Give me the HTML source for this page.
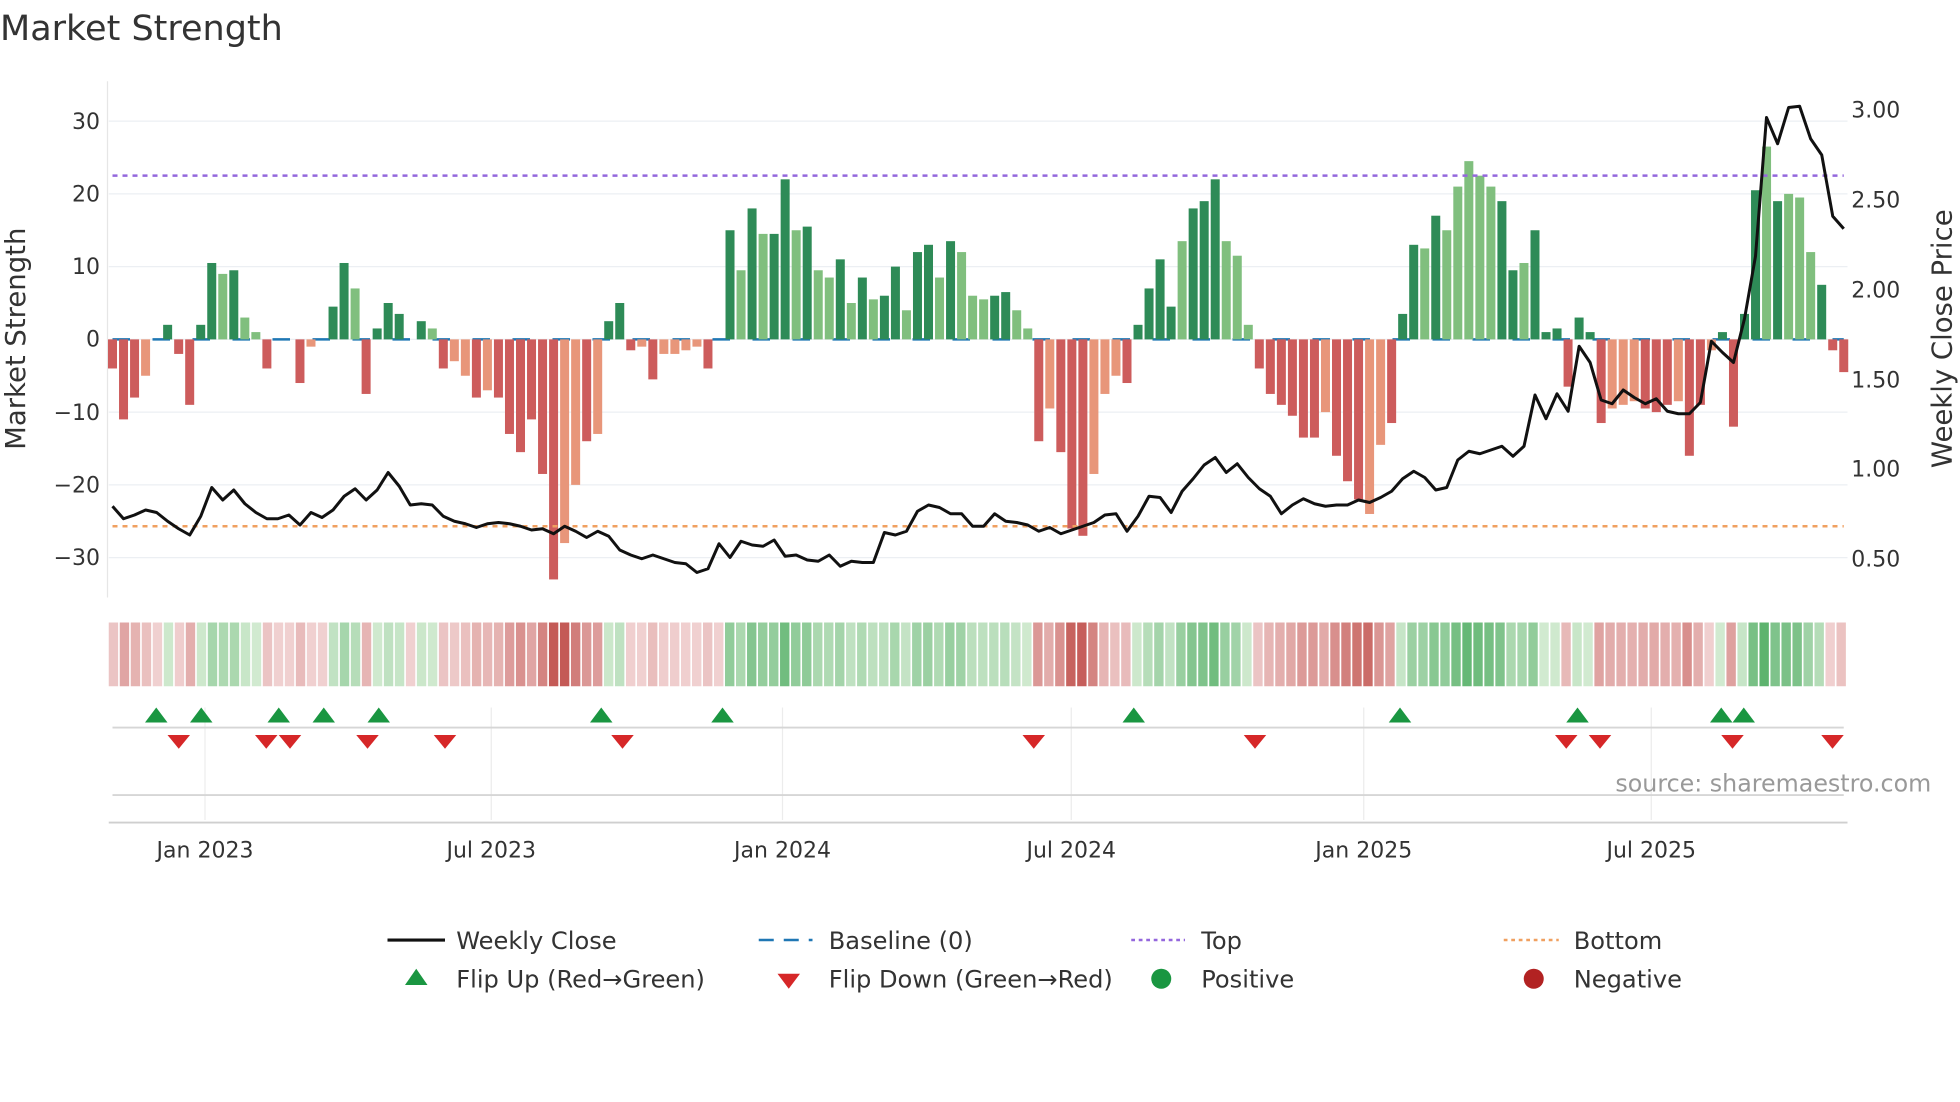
<!DOCTYPE html>
<html><head><meta charset="utf-8"><style>
html,body{margin:0;padding:0;background:#fff;}
svg{display:block;font-family:"DejaVu Sans","Liberation Sans",sans-serif;}
</style></head><body>
<svg id="s" width="1960" height="1102" viewBox="0 0 1568 881.6" xmlns="http://www.w3.org/2000/svg">
<rect width="1568" height="882" fill="#fff"/>
<text x="0" y="32" font-size="28" fill="#333">Market Strength</text>
<g id="grid"></g>
<g id="bars"></g>
<g id="heat"></g>
<g id="marks"></g>
<g font-size="17.6" fill="#333">
<text x="80" y="103" text-anchor="end">30</text>
<text x="80" y="161" text-anchor="end">20</text>
<text x="80" y="219" text-anchor="end">10</text>
<text x="80" y="277" text-anchor="end">0</text>
<text x="80" y="336" text-anchor="end">−10</text>
<text x="80" y="394" text-anchor="end">−20</text>
<text x="80" y="452" text-anchor="end">−30</text>
<text x="1481" y="94">3.00</text>
<text x="1481" y="166">2.50</text>
<text x="1481" y="238">2.00</text>
<text x="1481" y="310">1.50</text>
<text x="1481" y="381">1.00</text>
<text x="1481" y="453">0.50</text>
<text x="164" y="686" text-anchor="middle">Jan 2023</text>
<text x="393" y="686" text-anchor="middle">Jul 2023</text>
<text x="626" y="686" text-anchor="middle">Jan 2024</text>
<text x="857" y="686" text-anchor="middle">Jul 2024</text>
<text x="1091" y="686" text-anchor="middle">Jan 2025</text>
<text x="1321" y="686" text-anchor="middle">Jul 2025</text>
</g>
<text x="20" y="271" font-size="22" fill="#333" text-anchor="middle" transform="rotate(-90 20 271)">Market Strength</text>
<text x="1561" y="271" font-size="22" fill="#333" text-anchor="middle" transform="rotate(-90 1561 271)">Weekly Close Price</text>
<text x="1545" y="633" font-size="19" fill="#999" text-anchor="end">source: sharemaestro.com</text>
<g font-size="19.3" fill="#333">
<line x1="310" y1="752" x2="356" y2="752" stroke="#111" stroke-width="2.5"/>
<text x="365" y="759">Weekly Close</text>
<line x1="607" y1="752" x2="650" y2="752" stroke="#1f77b4" stroke-width="2" stroke-dasharray="12,8"/>
<text x="663" y="759">Baseline (0)</text>
<line x1="905" y1="752" x2="948" y2="752" stroke="#9467dd" stroke-width="2" stroke-dasharray="3,3"/>
<text x="961" y="759">Top</text>
<line x1="1203" y1="752" x2="1247" y2="752" stroke="#f0a060" stroke-width="2" stroke-dasharray="3,3"/>
<text x="1259" y="759">Bottom</text>
<polygon points="324,788 342,788 333,775" fill="#1a9641"/>
<text x="365" y="790">Flip Up (Red→Green)</text>
<polygon points="622,779 640,779 631,791" fill="#d62728"/>
<text x="663" y="790">Flip Down (Green→Red)</text>
<circle cx="929" cy="783" r="8" fill="#1a9641"/>
<text x="961" y="790">Positive</text>
<circle cx="1227" cy="783" r="8" fill="#b22222"/>
<text x="1259" y="790">Negative</text>
</g>
</svg>
<script>
var NS="http://www.w3.org/2000/svg";
function el(p,t,a){var e=document.createElementNS(NS,t);for(var k in a)e.setAttribute(k,a[k]);document.getElementById(p).appendChild(e);return e;}
var V=[-4,-11,-8,-5,0,2,-2,-9,2,10.5,9,9.5,3,1,-4,0,0,-6,-1,0,4.5,10.5,7,-7.5,1.5,5,3.5,0,2.5,1.5,-4,-3,-5,-8,-7,-8,-13,-15.5,-11,-18.5,-33,-28,-20,-14,-13,2.5,5,-1.5,-1,-5.5,-2,-2,-1.5,-1,-4,0,15,9.5,18,14.5,14.5,22,15,15.5,9.5,8.5,11,5,8.5,5.5,6,10,4,12,13,8.5,13.5,12,6,5.5,6,6.5,4,1.5,-14,-9.5,-15.5,-26,-27,-18.5,-7.5,-5,-6,2,7,11,4.5,13.5,18,19,22,13.5,11.5,2,-4,-7.5,-9,-10.5,-13.5,-13.5,-10,-16,-19.5,-22,-24,-14.5,-11.5,3.5,13,12.5,17,15,21,24.5,22.5,21,19,9.5,10.5,15,1,1.5,-6.5,3,1,-11.5,-9.5,-9,-8.5,-9.5,-10,-9,-8.5,-16,-9,-1.5,1,-12,3.5,20.5,26.5,19,20,19.5,12,7.5,-1.5,-4.5];
var light={};[3,4,10,12,13,18,22,27,29,31,32,34,41,42,44,48,50,51,52,53,57,59,62,64,65,67,69,72,75,77,78,79,82,83,85,89,90,91,97,101,102,103,110,114,115,119,121,122,123,124,125,128,136,137,138,142,145,150,152,153,154].forEach(function(i){light[i]=1;});
var N=V.length, x0=90, dx=(1475-90)/(N-1), y0=271.5, k=5.82;
for(var v=-30;v<=30;v+=10){el("grid","line",{x1:87,x2:1478,y1:y0-v*k,y2:y0-v*k,stroke:"#eceff3","stroke-width":1});}
el("grid","line",{x1:86,x2:86,y1:65,y2:478,stroke:"#e6e6e6"});
[164,393,626,857,1091,1321].forEach(function(x){el("grid","line",{x1:x,x2:x,y1:566,y2:656,stroke:"#ececec"});});
el("grid","line",{x1:90,x2:1475,y1:582,y2:582,stroke:"#d6d6d6","stroke-width":1.5});
el("grid","line",{x1:90,x2:1475,y1:636,y2:636,stroke:"#d6d6d6","stroke-width":1.5});
el("grid","line",{x1:87,x2:1478,y1:658,y2:658,stroke:"#cfcfcf","stroke-width":1.5});
el("grid","line",{x1:90,x2:1475,y1:y0,y2:y0,stroke:"#1f77b4","stroke-width":2,"stroke-dasharray":"14,18"});
for(var i=0;i<N;i++){var v=V[i];if(v==0)continue;var x=x0+i*dx-3.6,h=Math.abs(v)*k,c;
 if(v>0)c=light[i]?"#80bf7e":"#2e8b57";else c=light[i]?"#e8967a":"#cd5c5c";
 el("bars","rect",{x:x,y:v>0?y0-h:y0,width:7.2,height:h,fill:c});}
el("bars","line",{x1:90,x2:1475,y1:140.5,y2:140.5,stroke:"#9467dd","stroke-width":2,"stroke-dasharray":"4,4"});
el("bars","line",{x1:90,x2:1475,y1:421,y2:421,stroke:"#f0a060","stroke-width":2,"stroke-dasharray":"4,4"});
var P=[405,415,412,408,410,417,423,428,413,390,400,392,403,410,415,415,412,420,410,414,408,397,391,400,392,378,389,404,403,404,413,417,419,422,419,418,419,421,424,423,427,421,425,430,425,429,440,444,447,444,447,450,451,458,455,435,446,433,436,437,432,445,444,448,449,444,453,449,450,450,426,428,425,409,404,406,411,411,421,421,411,417,418,420,425,422,427,424,421,418,412,411,425,413,397,398,410,393,383,372,366,378,371,382,391,397,411,404,399,403,405,404,404,400,402,398,393,383,377,382,392,390,368,361,363,360,357,365,357,316,335,315,329,277,290,320,323,312,318,323,319,329,331,331,322,273,282,290,255,205,94,115,86,85,111,124,173,183];
var d="";for(var i=0;i<P.length;i++){d+=(i?"L":"M")+(x0+i*(1385/(P.length-1))).toFixed(1)+","+P[i];}
el("bars","path",{d:d,fill:"none",stroke:"#111","stroke-width":2.4,"stroke-linejoin":"round"});
var cw=(1478-87)/N;
function mix(a,b,t){return "rgb("+[0,1,2].map(function(j){return Math.round(a[j]+(b[j]-a[j])*t);}).join(",")+")";}
for(var i=0;i<N;i++){var v=V[i],t=Math.min(1,Math.abs(v)/28),c;
 if(v>0)c=mix([214,236,212],[86,176,104],t);else c=mix([242,214,214],[196,90,86],Math.max(t,0.05));
 el("heat","rect",{x:87+i*cw,y:498,width:cw-1.3,height:51,fill:c});}
[125,161,223,259,303,481,578,907,1120,1262,1377,1395].forEach(function(x){el("marks","polygon",{points:(x-9)+",578 "+(x+9)+",578 "+x+",566",fill:"#1a9641"});});
[143,213,232,294,356,498,827,1004,1253,1280,1386,1466].forEach(function(x){el("marks","polygon",{points:(x-9)+",588 "+(x+9)+",588 "+x+",599",fill:"#d62728"});});
</script>
</body></html>
